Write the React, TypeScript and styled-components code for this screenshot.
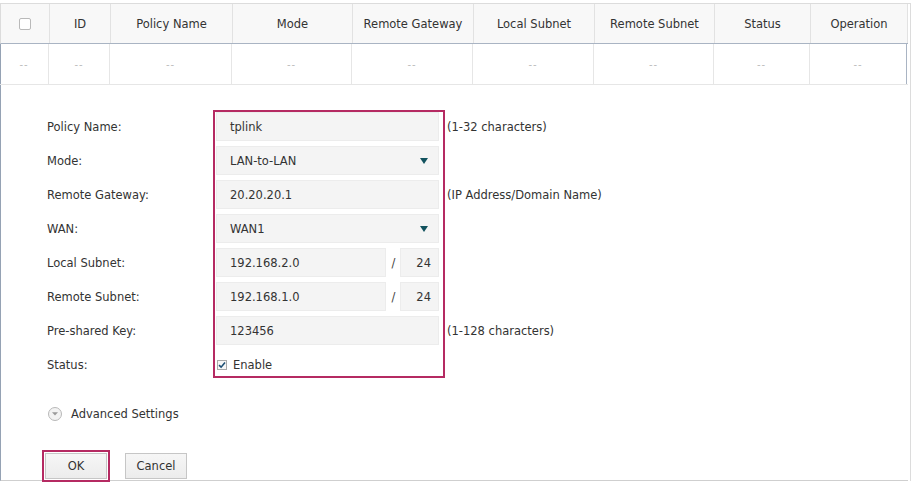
import React from "react";
import styled, { createGlobalStyle } from "styled-components";

const Global = createGlobalStyle`
  html, body { margin: 0; padding: 0; background: #fff; }
  body { font-family: "DejaVu Sans", Verdana, sans-serif; font-size: 11.5px; color: #333; }
  * { box-sizing: border-box; }
`;

const Page = styled.div`
  width: 911px;
  height: 482px;
  overflow: hidden;
  background: #fff;
  padding-top: 3px;
`;

const Frame = styled.div`
  border-top: 1px solid #dcdcdc;
  border-right: 1px solid #dcdcdc;
  height: 478px;
  width: 911px;
  padding-right: 2px;
  display: flex;
  flex-direction: column;
`;

const cols = "49px 61px 122px 120px 121px 121px 120px 96px 97px";

const HeadRow = styled.div`
  flex-shrink: 0;
  display: grid;
  grid-template-columns: ${cols};
  height: 40px;
  background: #f8f8f8;
  border-left: 1px solid #dcdcdc;
  border-bottom: 1px solid #a9b4c3;
`;

const HeadCell = styled.div`
  display: flex;
  align-items: center;
  justify-content: center;
  border-right: 1px solid #e2e2e2;
  color: #333;
  white-space: nowrap;
`;

const Lower = styled.div`
  flex: 1;
  min-height: 0;
  border-left: 1px solid #95a2b4;
  border-bottom: 1px solid #cfcfcf;
  display: flex;
  flex-direction: column;
`;

const BodyRow = styled.div`
  flex-shrink: 0;
  display: grid;
  grid-template-columns: ${cols};
  height: 41px;
  border-bottom: 1px solid #e6e6e6;
  margin-left: -1px;
`;

const BodyCell = styled.div<{ $last?: boolean }>`
  display: flex;
  align-items: center;
  justify-content: center;
  border-right: 1px solid ${(p) => (p.$last ? "#a9b4c3" : "#e6e6e6")};
  color: #bcbcbc;
  font-size: 10px;
  letter-spacing: 1px;
`;

const HeadCheck = styled.span`
  width: 12px;
  height: 12px;
  border: 1px solid #b9b9b9;
  border-radius: 2px;
  background: #fff;
`;

const Form = styled.div`
  flex-shrink: 0;
  display: flex;
  align-items: flex-start;
  padding: 25px 0 0 46px;
`;

const Column = styled.div<{ $w?: number }>`
  display: flex;
  flex-direction: column;
  gap: 5px;
  padding-top: 2px;
  width: ${(p) => (p.$w ? `${p.$w}px` : "auto")};
`;

const Line = styled.div<{ $h?: number; $pt?: number }>`
  height: ${(p) => p.$h ?? 29}px;
  padding-top: ${(p) => p.$pt ?? 0}px;
  display: flex;
  align-items: center;
  white-space: nowrap;
`;

const Highlight = styled.div`
  border: 2px solid #b52a62;
  padding: 0 4px 0 1px;
  width: 232px;
  display: flex;
  flex-direction: column;
  gap: 5px;
`;

const Hints = styled(Column)`
  padding-left: 2px;
`;

const Field = styled.div<{ $w?: number }>`
  height: 29px;
  width: ${(p) => (p.$w ? `${p.$w}px` : "100%")};
  background: #f4f4f4;
  border: 1px solid #ececec;
  display: flex;
  align-items: center;
  justify-content: space-between;
  padding: 0 10px 0 13px;
  color: #333;
`;

const ShortField = styled(Field)`
  justify-content: flex-end;
  padding: 0 7px 0 0;
`;

const Arrow = styled.span`
  width: 0;
  height: 0;
  border-left: 4.5px solid transparent;
  border-right: 4.5px solid transparent;
  border-top: 6px solid #12525e;
`;

const SubnetRow = styled.div`
  display: flex;
  align-items: center;
  height: 29px;
`;

const Slash = styled.span`
  width: 14px;
  text-align: center;
  color: #444;
`;

const StatusLine = styled.div`
  height: 26px;
  padding-top: 4px;
  display: flex;
  align-items: center;
  gap: 6px;
  padding-left: 1px;
`;

const SmallCheck = styled.span`
  width: 10px;
  height: 10px;
  border: 1px solid #a9a9a9;
  background: #f7f7f7;
  display: flex;
  align-items: center;
  justify-content: center;
`;

const Advanced = styled.div`
  flex-shrink: 0;
  display: flex;
  align-items: center;
  gap: 9px;
  margin: 26px 0 0 47px;
  height: 20px;
`;

const CircleIcon = styled.span`
  width: 14px;
  height: 14px;
  border-radius: 50%;
  border: 1px solid #b8b8b8;
  background: #f3f3f3;
  display: flex;
  align-items: center;
  justify-content: center;
`;

const Buttons = styled.div`
  flex-shrink: 0;
  display: flex;
  align-items: center;
  gap: 15px;
  margin: 26px 0 0 41px;
`;

const Mark = styled.div`
  border: 2px solid #b52a62;
  padding: 1px;
`;

const Button = styled.button`
  width: 62px;
  height: 26px;
  font-family: "DejaVu Sans", Verdana, sans-serif;
  font-size: 11.5px;
  color: #333;
  background: linear-gradient(#f6f6f6, #ececec);
  border: 1px solid #c6c6c6;
  padding: 0;
`;

const headers = [
  "",
  "ID",
  "Policy Name",
  "Mode",
  "Remote Gateway",
  "Local Subnet",
  "Remote Subnet",
  "Status",
  "Operation",
];

export default function App() {
  return (
    <>
      <Global />
      <Page>
        <Frame>
          <HeadRow>
            {headers.map((h, i) => (
              <HeadCell key={i}>{i === 0 ? <HeadCheck /> : h}</HeadCell>
            ))}
          </HeadRow>
          <Lower>
            <BodyRow>
              {headers.map((_, i) => (
                <BodyCell key={i} $last={i === headers.length - 1}>
                  --
                </BodyCell>
              ))}
            </BodyRow>
            <Form>
              <Column $w={166}>
                <Line>Policy Name:</Line>
                <Line>Mode:</Line>
                <Line>Remote Gateway:</Line>
                <Line>WAN:</Line>
                <Line>Local Subnet:</Line>
                <Line>Remote Subnet:</Line>
                <Line>Pre-shared Key:</Line>
                <Line $h={26} $pt={4}>Status:</Line>
              </Column>
              <Highlight>
                <Field>tplink</Field>
                <Field>
                  LAN-to-LAN
                  <Arrow />
                </Field>
                <Field>20.20.20.1</Field>
                <Field>
                  WAN1
                  <Arrow />
                </Field>
                <SubnetRow>
                  <Field $w={172}>192.168.2.0</Field>
                  <Slash>/</Slash>
                  <ShortField $w={39}>24</ShortField>
                </SubnetRow>
                <SubnetRow>
                  <Field $w={172}>192.168.1.0</Field>
                  <Slash>/</Slash>
                  <ShortField $w={39}>24</ShortField>
                </SubnetRow>
                <Field>123456</Field>
                <StatusLine>
                  <SmallCheck>
                    <svg width="8" height="8" viewBox="0 0 8 8">
                      <path d="M1 4.2 L3.1 6.2 L7 1.6" fill="none" stroke="#1d4f74" strokeWidth="1.6" />
                    </svg>
                  </SmallCheck>
                  Enable
                </StatusLine>
              </Highlight>
              <Hints>
                <Line>(1-32 characters)</Line>
                <Line />
                <Line>(IP Address/Domain Name)</Line>
                <Line />
                <Line />
                <Line />
                <Line>(1-128 characters)</Line>
              </Hints>
            </Form>
            <Advanced>
              <CircleIcon>
                <svg width="8" height="6" viewBox="0 0 8 6">
                  <path d="M1 1.2 L4 4.6 L7 1.2 Z" fill="#9a9a9a" />
                </svg>
              </CircleIcon>
              Advanced Settings
            </Advanced>
            <Buttons>
              <Mark>
                <Button>OK</Button>
              </Mark>
              <Button>Cancel</Button>
            </Buttons>
          </Lower>
        </Frame>
      </Page>
    </>
  );
}
